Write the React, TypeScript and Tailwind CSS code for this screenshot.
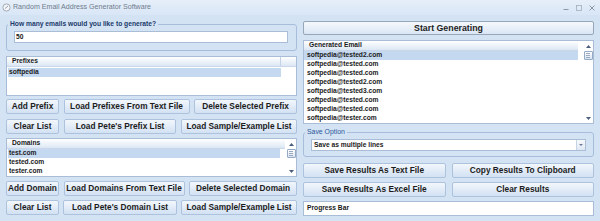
import React from "react";

const generated = [
  "softpedia@tested2.com",
  "softpedia@tested.com",
  "softpedia@tested.com",
  "softpedia@tested2.com",
  "softpedia@tested3.com",
  "softpedia@tested.com",
  "softpedia@tested.com",
  "softpedia@tester.com",
];

const domains = ["test.com", "tested.com", "tester.com"];

function Btn({ className, children }: { className: string; children: React.ReactNode }) {
  return (
    <div
      className={`h-[15px] flex items-center justify-center rounded-[2px] border border-[#adc3dd] bg-linear-to-b from-[#f3f7fc] to-[#d2e1f3] text-[8.3px] font-bold leading-none text-[#1c1c1c] whitespace-nowrap ${className}`}
    >
      {children}
    </div>
  );
}

function Arrow({ down }: { down?: boolean }) {
  return (
    <svg width="5" height="3" viewBox="0 0 5 3">
      <path d={down ? "M0 0h5L2.5 3z" : "M0 3h5L2.5 0z"} fill="#4a5d7c" />
    </svg>
  );
}

function ScrollBar() {
  return (
    <div className="w-[10px] flex flex-col items-center">
      <div className="h-[10px] flex items-center justify-center">
        <Arrow />
      </div>
      <div className="h-[9px] w-[9px] rounded-[1px] border border-[#94a9c4] bg-linear-to-b from-white to-[#d9e4f2] flex flex-col items-center justify-center gap-[1px]">
        <div className="w-[4px] h-px bg-[#9aaac0]" />
        <div className="w-[4px] h-px bg-[#9aaac0]" />
        <div className="w-[4px] h-px bg-[#9aaac0]" />
      </div>
      <div className="flex-1" />
      <div className="h-[9px] flex items-center justify-center">
        <Arrow down />
      </div>
    </div>
  );
}

function Row({ text, selected, className }: { text: string; selected?: boolean; className: string }) {
  return (
    <div
      className={`h-[9px] flex items-center text-[6.7px] font-bold leading-none text-[#1a1a1a] whitespace-nowrap ${selected ? "bg-[#c4d8f0]" : ""} ${className}`}
    >
      {text}
    </div>
  );
}

const header =
  "h-[10px] flex items-center bg-linear-to-b from-white to-[#dce7f4] border-b border-[#c9d7e8] text-[6.7px] font-bold leading-none text-[#1a1a1a]";

export default function App() {
  return (
    <div className="w-[600px] h-[221px] overflow-hidden bg-[#d4e3f4] font-['Liberation_Sans',Arial,sans-serif] flex flex-col">
      {/* title bar */}
      <div className="h-[15px] flex items-center bg-linear-to-b from-[#e6eff9] to-[#d9e6f6] pl-[2px] pr-[5px]">
        <svg width="9" height="9" viewBox="0 0 9 9">
          <circle cx="4.5" cy="4.5" r="3.6" fill="#f4f6f9" stroke="#9aa3ae" strokeWidth="0.9" />
          <path d="M3 5.5l3-2.5" stroke="#8c96a3" strokeWidth="0.9" />
        </svg>
        <span className="ml-[2px] text-[7.1px] leading-none text-[#6f7c8d]">
          Random Email Address Generator Software
        </span>
        <div className="ml-auto flex items-center gap-[7px]">
          <svg width="6" height="6" viewBox="0 0 6 6">
            <path d="M0.5 4.5h5" stroke="#8d99a8" strokeWidth="1" />
          </svg>
          <svg width="6" height="6" viewBox="0 0 6 6">
            <rect x="0.5" y="0.5" width="5" height="5" fill="none" stroke="#a3adb9" strokeWidth="0.8" />
          </svg>
          <svg width="6" height="6" viewBox="0 0 6 6">
            <path d="M0.5 0.5l5 5M5.5 0.5l-5 5" stroke="#8d99a8" strokeWidth="1" />
          </svg>
        </div>
      </div>

      <div className="flex gap-[6px] px-[6px] pt-[5px]">
        {/* left column */}
        <div className="w-[291px] flex flex-col">
          <fieldset className="m-0 min-w-0 rounded-[3px] border border-[#a6bedb] pl-[7px] pr-[8px] pt-[3px] pb-[7px]">
            <legend className="ml-[-6px] px-[2px] text-[6.7px] leading-[8px] font-bold text-[#1b3a6b]">
              How many emails would you like to generate?
            </legend>
            <div className="h-[12px] flex items-center bg-white border border-[#a9bdd6] pl-[1px] text-[6.7px] font-bold leading-none text-[#1a1a1a]">
              50
            </div>
          </fieldset>

          <div className="mt-[5px] h-[40px] bg-white border border-[#a9bdd6] flex flex-col">
            <div className={header}>
              <div className="w-[274px] h-full flex items-center border-r border-[#c3d2e4] pl-[5px]">Prefixes</div>
            </div>
            <div className="pl-[1px] pt-[1px]">
              <Row text="softpedia" selected className="w-[273px] pl-[1px]" />
            </div>
          </div>

          <div className="mt-[3px] flex justify-between">
            <Btn className="w-[53px]">Add Prefix</Btn>
            <Btn className="w-[126px]">Load Prefixes From Text File</Btn>
            <Btn className="w-[103px]">Delete Selected Prefix</Btn>
          </div>
          <div className="mt-[5px] flex justify-between">
            <Btn className="w-[53px]">Clear List</Btn>
            <Btn className="w-[112px]">Load Pete's Prefix List</Btn>
            <Btn className="w-[116px]">Load Sample/Example List</Btn>
          </div>

          <div className="mt-[4px] h-[39px] bg-white border border-[#a9bdd6] flex">
            <div className="flex-1 flex flex-col pr-[1px]">
              <div className={`${header} pl-[5px]`}>Domains</div>
              <div className="pl-[1px]">
                {domains.map((d, i) => (
                  <Row key={d} text={d} selected={i === 0} className="w-[272px] pl-[1px]" />
                ))}
              </div>
            </div>
            <ScrollBar />
          </div>

          <div className="mt-[4px] flex justify-between">
            <Btn className="w-[53px]">Add Domain</Btn>
            <Btn className="w-[121px]">Load Domains From Text File</Btn>
            <Btn className="w-[108px]">Delete Selected Domain</Btn>
          </div>
          <div className="mt-[4px] flex justify-between">
            <Btn className="w-[53px]">Clear List</Btn>
            <Btn className="w-[114px]">Load Pete's Domain List</Btn>
            <Btn className="w-[116px]">Load Sample/Example List</Btn>
          </div>
        </div>

        {/* right column */}
        <div className="w-[291px] flex flex-col">
          <div className="mt-[1px] h-[14px] flex items-center justify-center rounded-[2px] border border-[#97a6b8] bg-linear-to-b from-[#f5f8fc] to-[#dae6f4] text-[8.8px] font-bold leading-none text-[#1c1c1c]">
            Start Generating
          </div>

          <div className="mt-[5px] h-[84px] bg-white border border-[#a9bdd6] flex">
            <div className="flex-1 flex flex-col pr-[5px]">
              <div className={`${header} pl-[5px]`}>Generated Email</div>
              {generated.map((g, i) => (
                <Row key={i} text={g} selected={i === 0} className="pl-[3px]" />
              ))}
            </div>
            <ScrollBar />
          </div>

          <fieldset className="mt-[4px] m-0 min-w-0 rounded-[3px] border border-[#a6bedb] pl-[7px] pr-[7px] pt-[3px] pb-[5px]">
            <legend className="ml-[-6px] px-[2px] text-[6.9px] leading-[8px] text-[#2b5797]">Save Option</legend>
            <div className="h-[12px] flex items-center bg-white border border-[#a9bdd6] pl-[2px] text-[6.7px] font-bold leading-none text-[#1a1a1a]">
              <span className="flex-1">Save as multiple lines</span>
              <div className="w-[9px] h-full flex items-center justify-center border-l border-[#c5d3e4] bg-linear-to-b from-[#f7f9fc] to-[#dfe8f3]">
                <svg width="4" height="2" viewBox="0 0 4 2">
                  <path d="M0 0h4L2 2z" fill="#6a7b96" />
                </svg>
              </div>
            </div>
          </fieldset>

          <div className="mt-[6px] grid grid-cols-2 gap-x-[6px] gap-y-[4px]">
            <Btn className="w-full">Save Results As Text File</Btn>
            <Btn className="w-full">Copy Results To Clipboard</Btn>
            <Btn className="w-full">Save Results As Excel File</Btn>
            <Btn className="w-full">Clear Results</Btn>
          </div>

          <div className="mt-[4px] h-[15px] flex items-center bg-white border border-[#a9bdd6] pl-[3px] text-[6.7px] font-bold leading-none text-[#1a1a1a]">
            Progress Bar
          </div>
        </div>
      </div>
    </div>
  );
}
